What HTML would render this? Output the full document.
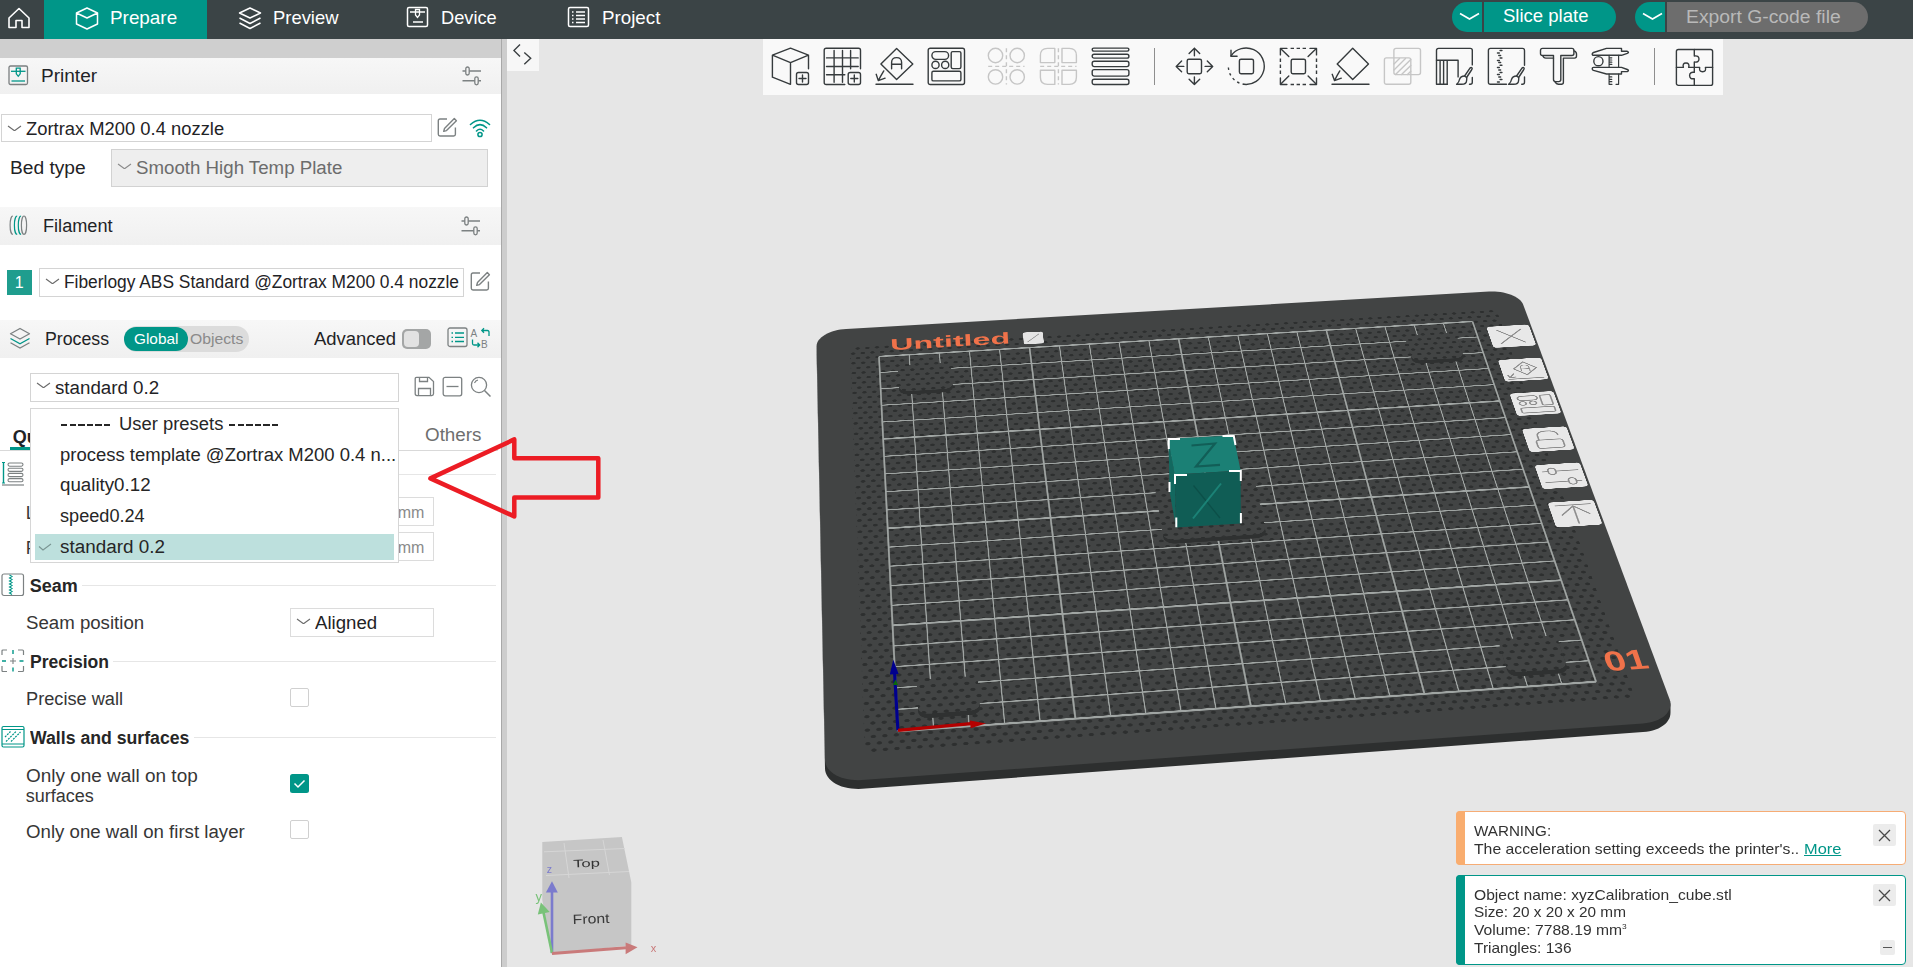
<!DOCTYPE html><html><head><meta charset="utf-8"><style>*{margin:0;padding:0}
html,body{width:1913px;height:967px;overflow:hidden;background:#e6e6e6;font-family:"Liberation Sans", sans-serif}
.a{position:absolute}
.t{position:absolute;white-space:nowrap;font-family:"Liberation Sans", sans-serif}
</style></head><body><div class="a" style="left:0px;top:0px;width:1913px;height:39px;background:#3b4446"></div>
<div class="a" style="left:44px;top:0px;width:163px;height:39px;background:#009688"></div>
<svg class="a" style="left:7px;top:7px;" width="24" height="22" viewBox="0 0 24 22"><path d="M2 11 L12 1.5 L22 11 V20.5 H15 V13.5 H9 V20.5 H2 Z" fill="none" stroke="#fff" stroke-width="1.6" stroke-linejoin="round"/></svg>
<svg class="a" style="left:75px;top:7px;" width="24" height="23" viewBox="0 0 24 23"><path d="M12 1 L22.5 6 V17 L12 22 L1.5 17 V6 Z M1.5 6 L12 11 L22.5 6" fill="none" stroke="#fff" stroke-width="1.5" stroke-linejoin="round"/></svg>
<div id="t_prepare" class="t" style="left:110.12px;top:9.18px;font-size:18.5px;line-height:18.5px;color:#fff;font-weight:400;transform:scaleX(1.0203);transform-origin:0 0;">Prepare</div>
<svg class="a" style="left:238px;top:7px;" width="24" height="23" viewBox="0 0 24 23"><path d="M12 1 L22.5 6 L12 11 L1.5 6 Z" fill="none" stroke="#fff" stroke-width="1.5" stroke-linejoin="round"/><path d="M1.5 11 L12 16.5 L22.5 11 M1.5 16 L12 21.5 L22.5 16" fill="none" stroke="#fff" stroke-width="1.5" stroke-linejoin="round"/></svg>
<div id="t_preview" class="t" style="left:273.02px;top:9.28px;font-size:18.5px;line-height:18.5px;color:#fff;font-weight:400;transform:scaleX(0.9954);transform-origin:0 0;">Preview</div>
<svg class="a" style="left:406px;top:6px;" width="24" height="22" viewBox="0 0 24 22"><rect x="1.5" y="1.5" width="20" height="19" rx="1.5" fill="none" stroke="#fff" stroke-width="1.5"/><path d="M4 6 H19 M7 16 H17" stroke="#fff" stroke-width="1.5"/><path d="M9.5 3.5 H13.5 V9 L11.5 11.5 L9.5 9 Z" fill="none" stroke="#fff" stroke-width="1.3"/></svg>
<div id="t_device" class="t" style="left:441.42px;top:9.18px;font-size:18.5px;line-height:18.5px;color:#fff;font-weight:400;transform:scaleX(0.9855);transform-origin:0 0;">Device</div>
<svg class="a" style="left:567px;top:6px;" width="24" height="22" viewBox="0 0 24 22"><rect x="1.5" y="1.5" width="20" height="19" rx="1.5" fill="none" stroke="#fff" stroke-width="1.5"/><path d="M5 6 H6.5 M9 6 H18 M5 9.5 H6.5 M9 9.5 H18 M5 13 H6.5 M9 13 H18 M5 16.5 H6.5 M9 16.5 H18" stroke="#fff" stroke-width="1.5"/></svg>
<div id="t_project" class="t" style="left:602.42px;top:9.18px;font-size:18.5px;line-height:18.5px;color:#fff;font-weight:400;transform:scaleX(1.0140);transform-origin:0 0;">Project</div>
<div class="a" style="left:1452px;top:2px;width:30px;height:30px;background:#009688;border-radius:15px 0 0 15px"></div>
<div class="a" style="left:1484px;top:2px;width:132px;height:30px;background:#009688;border-radius:0 15px 15px 0"></div>
<svg class="a" style="left:1459px;top:12px;" width="22" height="9" viewBox="0 0 22 9"><path d="M1 1.5 L10.5 7 L20 1.5" fill="none" stroke="#fff" stroke-width="1.6"/></svg>
<div id="t_slice" class="t" style="left:1503.04px;top:8.03px;font-size:17.5px;line-height:17.5px;color:#fff;font-weight:400;transform:scaleX(1.0582);transform-origin:0 0;">Slice plate</div>
<div class="a" style="left:1635px;top:2px;width:30px;height:30px;background:#009688;border-radius:15px 0 0 15px"></div>
<div class="a" style="left:1667px;top:2px;width:201px;height:30px;background:#6d6d6d;border-radius:0 15px 15px 0"></div>
<svg class="a" style="left:1642px;top:12px;" width="22" height="9" viewBox="0 0 22 9"><path d="M1 1.5 L10.5 7 L20 1.5" fill="none" stroke="#fff" stroke-width="1.6"/></svg>
<div id="t_export" class="t" style="left:1686.34px;top:8.53px;font-size:17.5px;line-height:17.5px;color:#b9b9b9;font-weight:400;transform:scaleX(1.1043);transform-origin:0 0;">Export G-code file</div>
<div class="a" style="left:0px;top:39px;width:501px;height:928px;background:#fff"></div>
<div class="a" style="left:0px;top:39px;width:501px;height:19px;background:#cfcfcf"></div>
<div class="a" style="left:501px;top:39px;width:1px;height:928px;background:#a8a8a8"></div>
<div class="a" style="left:502px;top:39px;width:5px;height:928px;background:#cdcdcd"></div>
<div class="a" style="left:0px;top:58px;width:501px;height:36px;background:linear-gradient(#f7f7f7,#f0f0f0)"></div>
<svg class="a" style="left:8px;top:65px;" width="21" height="21" viewBox="0 0 21 21"><rect x="1" y="1" width="18.5" height="18.5" rx="1.5" fill="none" stroke="#7b7f80" stroke-width="1.3"/><path d="M3 6.3 H17.5" stroke="#009688" stroke-width="1.3"/><path d="M8.3 3.2 H12.2 V8.8 L10.25 11.3 L8.3 8.8 Z" fill="none" stroke="#009688" stroke-width="1.3"/><path d="M3.5 16 H17" stroke="#009688" stroke-width="1.3"/></svg>
<div id="t_printer" class="t" style="left:41.23px;top:67.30px;font-size:18px;line-height:18px;color:#1f2326;font-weight:400;transform:scaleX(1.0577);transform-origin:0 0;">Printer</div>
<svg class="a" style="left:462px;top:66px;" width="20" height="20" viewBox="0 0 20 20"><path d="M0.5 5 H19 M0.5 14.8 H19" stroke="#7c8182" stroke-width="1.4"/><rect x="3.8" y="1" width="3.4" height="8" rx="1.7" fill="#f3f3f3" stroke="#7c8182" stroke-width="1.3"/><rect x="12.8" y="10.8" width="3.4" height="8" rx="1.7" fill="#f3f3f3" stroke="#7c8182" stroke-width="1.3"/></svg>
<div class="a" style="left:1px;top:114px;width:431px;height:28px;border:1px solid #d4d4d4;box-sizing:border-box;background:#fff"></div>
<svg class="a" style="left:7px;top:124.5px;" width="15" height="6.8" viewBox="0 0 15 6.8"><path d="M1 1 L7.5 5.8 L14 1" fill="none" stroke="#6a6a6a" stroke-width="1.1"/></svg>
<div id="t_zortrax" class="t" style="left:25.73px;top:119.84px;font-size:18.3px;line-height:18.3px;color:#1f2326;font-weight:400;transform:scaleX(1.0051);transform-origin:0 0;">Zortrax M200 0.4 nozzle</div>
<svg class="a" style="left:437px;top:117px;" width="21" height="21" viewBox="0 0 21 21"><path d="M10 2 H3 Q1.3 2 1.3 3.7 V17.3 Q1.3 19 3 19 H16.7 Q18.4 19 18.4 17.3 V10.5" fill="none" stroke="#7c8182" stroke-width="1.4"/><path d="M17.3 1.6 L19.4 3.7 L9.5 13.6 L6.7 14.4 L7.5 11.5 Z" fill="none" stroke="#7c8182" stroke-width="1.4" stroke-linejoin="round"/></svg>
<svg class="a" style="left:469px;top:117px;" width="22" height="21" viewBox="0 0 22 21"><path d="M1.5 7.5 Q11 -1 20.5 7.5 M4.5 10.8 Q11 4.5 17.5 10.8 M7.5 14 Q11 10.5 14.5 14" fill="none" stroke="#009688" stroke-width="1.6" stroke-linecap="round"/><circle cx="11" cy="17.5" r="2.1" fill="none" stroke="#009688" stroke-width="1.5"/></svg>
<div id="t_bedtype" class="t" style="left:10.23px;top:158.90px;font-size:18px;line-height:18px;color:#1f2326;font-weight:400;transform:scaleX(1.0652);transform-origin:0 0;">Bed type</div>
<div class="a" style="left:111px;top:149px;width:377px;height:38px;border:1px solid #d2d2d2;box-sizing:border-box;background:#eeeeee"></div>
<svg class="a" style="left:117px;top:162.5px;" width="15" height="6.8" viewBox="0 0 15 6.8"><path d="M1 1 L7.5 5.8 L14 1" fill="none" stroke="#8a8a8a" stroke-width="1.1"/></svg>
<div id="t_smooth" class="t" style="left:135.73px;top:158.90px;font-size:18px;line-height:18px;color:#6c6c6c;font-weight:400;transform:scaleX(1.0381);transform-origin:0 0;">Smooth High Temp Plate</div>
<div class="a" style="left:0px;top:207px;width:501px;height:38px;background:linear-gradient(#f7f7f7,#f0f0f0)"></div>
<svg class="a" style="left:9px;top:215px;" width="20" height="21" viewBox="0 0 20 21"><path d="M3.9 1 A2.8 9.2 0 0 0 3.9 19.4" fill="none" stroke="#7c8182" stroke-width="1.2"/><path d="M8.2 1 A2.8 9.2 0 0 0 8.2 19.4 M12.1 1 A2.8 9.2 0 0 0 12.1 19.4" fill="none" stroke="#009688" stroke-width="1.2"/><ellipse cx="15" cy="10.2" rx="2.6" ry="9.2" fill="none" stroke="#7c8182" stroke-width="1.2"/></svg>
<div id="t_filament" class="t" style="left:43.23px;top:216.80px;font-size:18px;line-height:18px;color:#1f2326;font-weight:400;transform:scaleX(1.0074);transform-origin:0 0;">Filament</div>
<svg class="a" style="left:461px;top:216px;" width="20" height="20" viewBox="0 0 20 20"><path d="M0.5 5 H19 M0.5 14.8 H19" stroke="#7c8182" stroke-width="1.4"/><rect x="3.8" y="1" width="3.4" height="8" rx="1.7" fill="#f3f3f3" stroke="#7c8182" stroke-width="1.3"/><rect x="12.8" y="10.8" width="3.4" height="8" rx="1.7" fill="#f3f3f3" stroke="#7c8182" stroke-width="1.3"/></svg>
<div class="a" style="left:7px;top:270px;width:25px;height:25px;background:#1f9d8e"></div>
<div id="t_one" class="t" style="left:14.76px;top:274.60px;font-size:16px;line-height:16px;color:#fff;font-weight:400;">1</div>
<div class="a" style="left:39px;top:268px;width:425px;height:29px;border:1px solid #d4d4d4;box-sizing:border-box;background:#fff"></div>
<svg class="a" style="left:45px;top:277.5px;" width="15" height="6.8" viewBox="0 0 15 6.8"><path d="M1 1 L7.5 5.8 L14 1" fill="none" stroke="#6a6a6a" stroke-width="1.1"/></svg>
<div id="t_fiber" class="t" style="left:64.13px;top:273.00px;font-size:18px;line-height:18px;color:#1f2326;font-weight:400;transform:scaleX(0.9647);transform-origin:0 0;">Fiberlogy ABS Standard @Zortrax M200 0.4 nozzle</div>
<svg class="a" style="left:470px;top:271px;" width="21" height="21" viewBox="0 0 21 21"><path d="M10 2 H3 Q1.3 2 1.3 3.7 V17.3 Q1.3 19 3 19 H16.7 Q18.4 19 18.4 17.3 V10.5" fill="none" stroke="#7c8182" stroke-width="1.4"/><path d="M17.3 1.6 L19.4 3.7 L9.5 13.6 L6.7 14.4 L7.5 11.5 Z" fill="none" stroke="#7c8182" stroke-width="1.4" stroke-linejoin="round"/></svg>
<div class="a" style="left:0px;top:320px;width:501px;height:38px;background:linear-gradient(#f7f7f7,#f0f0f0)"></div>
<svg class="a" style="left:9px;top:327px;" width="22" height="22" viewBox="0 0 22 22"><path d="M11 1.5 L20.5 6.8 L11 12 L1.5 6.8 Z" fill="none" stroke="#7c8182" stroke-width="1.3" stroke-linejoin="round"/><path d="M1.5 11.5 L11 16.8 L20.5 11.5" fill="none" stroke="#009688" stroke-width="1.3"/><path d="M1.5 15.8 L11 21 L20.5 15.8" fill="none" stroke="#7c8182" stroke-width="1.3"/></svg>
<div id="t_process" class="t" style="left:44.73px;top:329.90px;font-size:18px;line-height:18px;color:#1f2326;font-weight:400;transform:scaleX(0.9844);transform-origin:0 0;">Process</div>
<div class="a" style="left:124px;top:326px;width:125px;height:26px;background:#dcdcdc;border-radius:13px"></div>
<div class="a" style="left:124px;top:327px;width:64px;height:24px;background:#009688;border-radius:12px"></div>
<div id="t_global" class="t" style="left:134.28px;top:331.45px;font-size:15px;line-height:15px;color:#fff;font-weight:400;transform:scaleX(1.0238);transform-origin:0 0;">Global</div>
<div id="t_objects" class="t" style="left:189.78px;top:331.45px;font-size:15px;line-height:15px;color:#8a8a8a;font-weight:400;transform:scaleX(1.0490);transform-origin:0 0;">Objects</div>
<div id="t_advanced" class="t" style="left:314.23px;top:330.10px;font-size:18px;line-height:18px;color:#1f2326;font-weight:400;transform:scaleX(1.0253);transform-origin:0 0;">Advanced</div>
<div class="a" style="left:402px;top:329px;width:29px;height:20px;background:#a4a6a6;border-radius:5px"></div>
<div class="a" style="left:404px;top:331px;width:15px;height:16px;background:#e2e2e2;border-radius:4px"></div>
<svg class="a" style="left:447px;top:327px;" width="22" height="21" viewBox="0 0 22 21"><rect x="1" y="1" width="19" height="18.5" rx="2" fill="none" stroke="#7c8182" stroke-width="1.3"/><path d="M4.5 6 H6 M8 6 H17 M4.5 10.3 H6 M8 10.3 H17 M4.5 14.5 H6 M8 14.5 H17" stroke="#009688" stroke-width="1.3"/></svg>
<svg class="a" style="left:470px;top:327px;" width="22" height="22" viewBox="0 0 22 22"><text x="0.5" y="9.5" font-family="Liberation Sans" font-size="10" fill="#7c8182">A</text><text x="11" y="20.5" font-family="Liberation Sans" font-size="10" fill="#7c8182">B</text><path d="M19 9 V5 Q19 3.5 17.5 3.5 H12 M14 1.2 L11.8 3.5 L14 5.8" fill="none" stroke="#009688" stroke-width="1.3"/><path d="M2.5 12.5 V16.5 Q2.5 18 4 18 H9.5 M7.5 15.7 L9.7 18 L7.5 20.3" fill="none" stroke="#009688" stroke-width="1.3"/></svg>
<div class="a" style="left:30px;top:373px;width:369px;height:29px;border:1px solid #d4d4d4;box-sizing:border-box;background:#fff"></div>
<svg class="a" style="left:36px;top:381.5px;" width="15" height="6.8" viewBox="0 0 15 6.8"><path d="M1 1 L7.5 5.8 L14 1" fill="none" stroke="#6a6a6a" stroke-width="1.1"/></svg>
<div id="t_std" class="t" style="left:55.43px;top:379.00px;font-size:18px;line-height:18px;color:#1f2326;font-weight:400;transform:scaleX(1.0408);transform-origin:0 0;">standard 0.2</div>
<svg class="a" style="left:414px;top:376px;" width="21" height="21" viewBox="0 0 21 21"><path d="M2.5 1.3 H15 L19.5 5.5 V17.8 Q19.5 19.6 17.7 19.6 H3 Q1.2 19.6 1.2 17.8 V3 Q1.2 1.3 2.5 1.3 Z" fill="none" stroke="#7c8182" stroke-width="1.3"/><path d="M5.5 1.5 V5.5 H13.5 V1.5 M4.5 19.5 V12.5 H16.5 V19.5" fill="none" stroke="#7c8182" stroke-width="1.3"/></svg>
<svg class="a" style="left:442px;top:376px;" width="21" height="21" viewBox="0 0 21 21"><rect x="1.2" y="1.3" width="18.5" height="18.5" rx="2" fill="none" stroke="#7c8182" stroke-width="1.3"/><path d="M4.5 10.5 H16.5" stroke="#7c8182" stroke-width="1.3"/></svg>
<svg class="a" style="left:470px;top:376px;" width="22" height="22" viewBox="0 0 22 22"><circle cx="9" cy="9" r="7.6" fill="none" stroke="#7c8182" stroke-width="1.3"/><path d="M14.5 14.5 L20.5 20.5" stroke="#7c8182" stroke-width="1.5"/><path d="M4.5 7 Q5.5 4.5 8 4" fill="none" stroke="#7c8182" stroke-width="1.1"/></svg>
<div id="t_qu" class="t" style="left:12.73px;top:427.50px;font-size:18px;line-height:18px;color:#1f2326;font-weight:700;">Quality</div>
<div id="t_others" class="t" style="left:425.33px;top:426.10px;font-size:18px;line-height:18px;color:#6e6e6e;font-weight:400;transform:scaleX(1.0453);transform-origin:0 0;">Others</div>
<div class="a" style="left:10px;top:447px;width:22px;height:3px;background:#009688"></div>
<div class="a" style="left:0px;top:450px;width:498px;height:1px;background:#d9d9d9"></div>
<svg class="a" style="left:1px;top:461px;" width="25" height="25" viewBox="0 0 25 25"><path d="M2.5 1.5 V22" stroke="#009688" stroke-width="1.4"/><path d="M1 1.5 H4 M1 22 H4" stroke="#009688" stroke-width="1.2"/><rect x="7" y="2" width="15" height="3.2" rx="1.6" fill="none" stroke="#7c8182" stroke-width="1.1"/><rect x="7" y="7.2" width="15" height="3.2" rx="1.6" fill="none" stroke="#7c8182" stroke-width="1.1"/><rect x="7" y="12.4" width="15" height="3.2" rx="1.6" fill="none" stroke="#7c8182" stroke-width="1.1"/><rect x="7" y="17.6" width="15" height="3.2" rx="1.6" fill="none" stroke="#7c8182" stroke-width="1.1"/><path d="M1 24 H23" stroke="#7c8182" stroke-width="1.2"/></svg>
<div class="a" style="left:30px;top:474px;width:466px;height:1px;background:#e6e6e6"></div>
<div id="t_L" class="t" style="left:25.73px;top:503.60px;font-size:18px;line-height:18px;color:#363636;font-weight:400;">Layer height</div>
<div id="t_F" class="t" style="left:25.73px;top:538.60px;font-size:18px;line-height:18px;color:#363636;font-weight:400;">First layer height</div>
<div class="a" style="left:290px;top:497px;width:144px;height:29px;border:1px solid #dcdcdc;box-sizing:border-box;background:#fff"></div>
<div class="a" style="left:290px;top:532px;width:144px;height:29px;border:1px solid #dcdcdc;box-sizing:border-box;background:#fff"></div>
<div id="t_mm1" class="t" style="left:397.76px;top:505.30px;font-size:16px;line-height:16px;color:#8a8a8a;font-weight:400;">mm</div>
<div id="t_mm2" class="t" style="left:397.76px;top:540.30px;font-size:16px;line-height:16px;color:#8a8a8a;font-weight:400;">mm</div>
<svg class="a" style="left:1px;top:573px;" width="24" height="24" viewBox="0 0 24 24"><rect x="1" y="1" width="21.5" height="21.5" rx="2" fill="none" stroke="#7c8182" stroke-width="1.2"/><path d="M8.5 2 L11 3.5 L8.5 5 L11 6.5 L8.5 8 L11 9.5 L8.5 11 L11 12.5 L8.5 14 L11 15.5 L8.5 17 L11 18.5 L8.5 20 L11 21.5" fill="none" stroke="#009688" stroke-width="1.1"/></svg>
<div id="t_seam" class="t" style="left:29.73px;top:576.90px;font-size:18px;line-height:18px;color:#262626;font-weight:700;">Seam</div>
<div class="a" style="left:82px;top:585px;width:414px;height:1px;background:#e6e6e6"></div>
<div id="t_seampos" class="t" style="left:25.73px;top:613.80px;font-size:18px;line-height:18px;color:#363636;font-weight:400;transform:scaleX(1.0357);transform-origin:0 0;">Seam position</div>
<div class="a" style="left:290px;top:608px;width:144px;height:29px;border:1px solid #dcdcdc;box-sizing:border-box;background:#fff"></div>
<svg class="a" style="left:296px;top:617.5px;" width="15" height="6.8" viewBox="0 0 15 6.8"><path d="M1 1 L7.5 5.8 L14 1" fill="none" stroke="#6a6a6a" stroke-width="1.1"/></svg>
<div id="t_aligned" class="t" style="left:315.23px;top:613.80px;font-size:18px;line-height:18px;color:#1f2326;font-weight:400;transform:scaleX(1.0339);transform-origin:0 0;">Aligned</div>
<svg class="a" style="left:1px;top:649px;" width="24" height="24" viewBox="0 0 24 24"><path d="M1 6 V2 Q1 1 2 1 H6 M17 1 H21.5 Q22.5 1 22.5 2 V6 M22.5 17 V21.5 Q22.5 22.5 21.5 22.5 H17 M6 22.5 H2 Q1 22.5 1 21.5 V17" fill="none" stroke="#7c8182" stroke-width="1.2"/><path d="M12 1 V5 M12 18.5 V22.5 M1 12 H5 M18.5 12 H22.5" stroke="#009688" stroke-width="1.4"/><path d="M12 9 V15 M9 12 H15" stroke="#7c8182" stroke-width="1.1"/></svg>
<div id="t_precision" class="t" style="left:30.23px;top:653.10px;font-size:18px;line-height:18px;color:#262626;font-weight:700;transform:scaleX(0.9747);transform-origin:0 0;">Precision</div>
<div class="a" style="left:113px;top:661px;width:383px;height:1px;background:#e6e6e6"></div>
<div id="t_precwall" class="t" style="left:26.23px;top:690.00px;font-size:18px;line-height:18px;color:#363636;font-weight:400;transform:scaleX(1.0106);transform-origin:0 0;">Precise wall</div>
<div class="a" style="left:290px;top:688px;width:19px;height:19px;border:1px solid #d0d0d0;border-radius:2px;box-sizing:border-box;background:#fff"></div>
<svg class="a" style="left:1px;top:725px;" width="25" height="24" viewBox="0 0 25 24"><rect x="1" y="1.5" width="22" height="20.5" rx="1.5" fill="none" stroke="#009688" stroke-width="1.2"/><path d="M1 4.5 H23 M1 19 H23" stroke="#009688" stroke-width="1.2"/><path d="M5 16.5 L15 6.5 M10 16.5 L19.5 7 M4 12 L9.5 6.5" stroke="#009688" stroke-width="1.2" stroke-dasharray="2 1"/></svg>
<div id="t_walls" class="t" style="left:29.73px;top:729.10px;font-size:18px;line-height:18px;color:#262626;font-weight:700;transform:scaleX(0.9815);transform-origin:0 0;">Walls and surfaces</div>
<div class="a" style="left:194px;top:737px;width:302px;height:1px;background:#e6e6e6"></div>
<div id="t_onlytop" class="t" style="left:25.73px;top:766.70px;font-size:18px;line-height:18px;color:#363636;font-weight:400;transform:scaleX(1.0528);transform-origin:0 0;">Only one wall on top</div>
<div id="t_surfaces" class="t" style="left:25.73px;top:786.90px;font-size:18px;line-height:18px;color:#363636;font-weight:400;">surfaces</div>
<svg class="a" style="left:290px;top:774px;" width="20" height="20" viewBox="0 0 20 20"><rect x="0" y="0" width="19" height="19" rx="2.5" fill="#009688"/><path d="M4.5 9.5 L8 13 L14.5 6.5" fill="none" stroke="#fff" stroke-width="1.5"/></svg>
<div id="t_onlyfirst" class="t" style="left:25.73px;top:822.50px;font-size:18px;line-height:18px;color:#363636;font-weight:400;transform:scaleX(1.0362);transform-origin:0 0;">Only one wall on first layer</div>
<div class="a" style="left:290px;top:820px;width:19px;height:19px;border:1px solid #d0d0d0;border-radius:2px;box-sizing:border-box;background:#fff"></div>
<div class="a" style="left:30px;top:408px;width:369px;height:155px;border:1px solid #d6d6d6;box-sizing:border-box;background:#fff"></div>
<div class="a" style="left:35px;top:534px;width:359px;height:26px;background:#bde0dd"></div>
<div class="a" style="left:61px;top:424px;width:52px;height:1.6px;background:repeating-linear-gradient(90deg,#262626 0,#262626 6.4px,transparent 6.4px,transparent 8.6px)"></div>
<div id="t_dd1" class="t" style="left:119.33px;top:415.10px;font-size:18px;line-height:18px;color:#262626;font-weight:400;transform:scaleX(1.0228);transform-origin:0 0;">User presets</div>
<div class="a" style="left:229px;top:424px;width:52px;height:1.6px;background:repeating-linear-gradient(90deg,#262626 0,#262626 6.4px,transparent 6.4px,transparent 8.6px)"></div>
<div id="t_dd2" class="t" style="left:59.73px;top:445.60px;font-size:18px;line-height:18px;color:#262626;font-weight:400;transform:scaleX(1.0268);transform-origin:0 0;">process template @Zortrax M200 0.4 n...</div>
<div id="t_dd3" class="t" style="left:59.73px;top:476.40px;font-size:18px;line-height:18px;color:#262626;font-weight:400;transform:scaleX(1.0400);transform-origin:0 0;">quality0.12</div>
<div id="t_dd4" class="t" style="left:59.73px;top:507.40px;font-size:18px;line-height:18px;color:#262626;font-weight:400;transform:scaleX(1.0072);transform-origin:0 0;">speed0.24</div>
<div id="t_dd5" class="t" style="left:59.73px;top:538.40px;font-size:18px;line-height:18px;color:#262626;font-weight:400;transform:scaleX(1.0480);transform-origin:0 0;">standard 0.2</div>
<svg class="a" style="left:38px;top:542px;" width="15" height="10" viewBox="0 0 15 10"><path d="M1 4.5 L5 8 L13 2" fill="none" stroke="#7a9593" stroke-width="1.1"/></svg>
<div class="a" style="left:507px;top:39px;width:1406px;height:928px;background:#e6e6e6"></div>
<div class="a" style="left:507px;top:39px;width:32px;height:32px;background:#f7f7f7"></div>
<svg class="a" style="left:513px;top:44px;" width="20" height="22" viewBox="0 0 20 22"><path d="M7 0.6 L0.9 6.5 L7 12.4" fill="none" stroke="#3a3f41" stroke-width="1.4"/><path d="M11.3 8.4 L17.7 14.3 L11.3 20.2" fill="none" stroke="#3a3f41" stroke-width="1.4"/></svg>
<div class="a" style="left:763px;top:39px;width:960px;height:56px;background:#f9f9f9"></div>
<svg class="a" style="left:771px;top:47px;" width="40" height="40" viewBox="0 0 40 40"><g fill="none" stroke="#363b3d" stroke-width="1.4" stroke-linejoin="round" stroke-linecap="round"><path d="M19.5 1.2 L37.5 8.2 L19.5 15.6 L1.4 8.2 Z M1.4 8.2 V30.2 L19.5 37.3 V15.6 M37.5 8.2 V21.8"/><rect x="25.5" y="25.5" width="12" height="12" rx="2"/><path d="M31.5 28 V35 M28 31.5 H35"/></g></svg>
<svg class="a" style="left:823px;top:47px;" width="40" height="40" viewBox="0 0 40 40"><g fill="none" stroke="#363b3d" stroke-width="1.4" stroke-linejoin="round" stroke-linecap="round"><path d="M21.8 37.5 H3.2 Q1.2 37.5 1.2 35.5 V3.2 Q1.2 1.2 3.2 1.2 H35.5 Q37.5 1.2 37.5 3.2 V21.8"/><path d="M11.1 3.5 V35.2 M19.5 3.5 V35.2 M27.6 3.5 V21.8 M3.5 10.9 H35.2 M3.5 19.5 H35.2 M3.5 27.8 H21.8"/><rect x="25.2" y="25.5" width="12.3" height="12" rx="2"/><path d="M31.3 28 V35 M27.8 31.5 H34.8"/></g></svg>
<svg class="a" style="left:875px;top:47px;" width="40" height="40" viewBox="0 0 40 40"><g fill="none" stroke="#363b3d" stroke-width="1.4" stroke-linejoin="round" stroke-linecap="round"><path d="M21.6 1.4 L37.8 16.9 L21.6 32.5 L5.9 16.9 Z"/><path d="M16.6 21.8 V15.5 Q16.6 10.6 21.6 10.6 Q26.6 10.6 26.6 15.5 V21.8 M16.6 17.2 H26.6"/><path d="M8.8 23.9 Q6 28.5 3.3 33.6 M1.2 27.3 L3.3 33.6 L10.1 31.2 M1 37.3 H38"/></g></svg>
<svg class="a" style="left:927px;top:47px;" width="40" height="40" viewBox="0 0 40 40"><g fill="none" stroke="#363b3d" stroke-width="1.4" stroke-linejoin="round" stroke-linecap="round"><rect x="1.2" y="1.2" width="36.3" height="36.3" rx="2"/><rect x="4.9" y="4.6" width="16.7" height="7.8" rx="3.9"/><rect x="24.2" y="4.6" width="9.7" height="17" rx="1.5"/><circle cx="8.5" cy="17.9" r="3.6"/><circle cx="18.2" cy="17.9" r="3.6"/><rect x="4.9" y="24.2" width="29" height="9.7" rx="1.5"/></g></svg>
<svg class="a" style="left:987px;top:47px;" width="40" height="40" viewBox="0 0 40 40"><g fill="none" stroke="#c6c6c6" stroke-width="1.4" stroke-linejoin="round" stroke-linecap="round"><circle cx="8.5" cy="8.5" r="7.2"/><circle cx="30.2" cy="8.5" r="7.2"/><circle cx="8.5" cy="29.9" r="7.2"/><circle cx="30.2" cy="29.9" r="7.2"/><path d="M19.4 1.2 V37.5 M1.2 19.4 H37.5" stroke-dasharray="4 3" stroke-linecap="butt"/></g></svg>
<svg class="a" style="left:1039px;top:47px;" width="40" height="40" viewBox="0 0 40 40"><g fill="none" stroke="#c6c6c6" stroke-width="1.4" stroke-linejoin="round" stroke-linecap="round"><path d="M15.8 15.6 H1.4 V8.5 Q1.4 1.4 8.5 1.4 H15.8 Z M23 15.6 H37.4 V8.5 Q37.4 1.4 30.3 1.4 H23 Z M15.8 23.2 H1.4 V30.3 Q1.4 37.4 8.5 37.4 H15.8 Z M23 23.2 H37.4 V30.3 Q37.4 37.4 30.3 37.4 H23 Z"/><path d="M19.4 1.2 V37.5 M1.2 19.4 H37.5" stroke-dasharray="4 3" stroke-linecap="butt"/></g></svg>
<svg class="a" style="left:1091px;top:47px;" width="40" height="40" viewBox="0 0 40 40"><g fill="none" stroke="#363b3d" stroke-width="1.4" stroke-linejoin="round" stroke-linecap="round"><rect x="1.2" y="1.1" width="36.7" height="3" rx="1.5"/><rect x="1.2" y="7.2" width="36.7" height="3.9" rx="1.9"/><rect x="1.2" y="14.3" width="36.7" height="5.3" rx="2"/><rect x="1.2" y="22.6" width="36.7" height="6.5" rx="2"/><rect x="1.2" y="32.3" width="36.7" height="5.2" rx="2"/></g></svg>
<div class="a" style="left:1154px;top:48px;width:1px;height:37px;background:#8e8e8e"></div>
<svg class="a" style="left:1175px;top:47px;" width="40" height="40" viewBox="0 0 40 40"><g fill="none" stroke="#363b3d" stroke-width="1.4" stroke-linejoin="round" stroke-linecap="round"><rect x="12.2" y="12.2" width="14.3" height="14.5" rx="1.6"/><path d="M19.4 1.2 V8.8 M14.1 6.6 L19.4 1.2 L24.7 6.6 M19.4 37.5 V30 M14.1 32.2 L19.4 37.5 L24.7 32.2 M1.2 19.4 H8.8 M6.6 14.1 L1.2 19.4 L6.6 24.7 M37.7 19.4 H30.1 M32.3 14.1 L37.7 19.4 L32.3 24.7"/></g></svg>
<svg class="a" style="left:1227px;top:47px;" width="40" height="40" viewBox="0 0 40 40"><g fill="none" stroke="#363b3d" stroke-width="1.4" stroke-linejoin="round" stroke-linecap="round"><rect x="12.4" y="12.2" width="14.1" height="14.5" rx="1.6"/><path d="M4 9 A18.2 18.2 0 1 1 17 37.3"/><path d="M1.4 20.5 A18.2 18.2 0 0 0 17 37.3" stroke-dasharray="2.5 3.3" stroke-linecap="butt"/><path d="M4 3.3 V9.2 H10.1"/></g></svg>
<svg class="a" style="left:1279px;top:47px;" width="40" height="40" viewBox="0 0 40 40"><g fill="none" stroke="#363b3d" stroke-width="1.4" stroke-linejoin="round" stroke-linecap="round"><rect x="12.2" y="12.2" width="14.3" height="14.5" rx="1.6"/><path d="M1.4 7.9 V1.4 H7.9 M31 1.4 H37.5 V7.9 M37.5 31 V37.5 H31 M7.9 37.5 H1.4 V31"/><path d="M11.6 1.4 H27.5 M11.6 37.5 H27.5 M1.4 11.6 V27.5 M37.5 11.6 V27.5" stroke-dasharray="3.4 2.6" stroke-linecap="butt"/><path d="M1.8 1.8 L9.8 9.6 M37.1 1.8 L29.1 9.6 M1.8 37.1 L9.8 29.1 M37.1 37.1 L29.1 29.1"/></g></svg>
<svg class="a" style="left:1331px;top:47px;" width="40" height="40" viewBox="0 0 40 40"><g fill="none" stroke="#363b3d" stroke-width="1.4" stroke-linejoin="round" stroke-linecap="round"><path d="M21.7 1.3 L37.5 16.9 L21.7 32.5 L6.2 16.9 Z"/><path d="M8.8 23.9 Q6 28.5 3.5 33.6 M1.2 27.3 L3.5 33.6 L10.3 31.2 M1 37.3 H38"/></g></svg>
<svg class="a" style="left:1383px;top:47px;" width="40" height="40" viewBox="0 0 40 40"><g fill="none" stroke="#c6c6c6" stroke-width="1.4" stroke-linejoin="round" stroke-linecap="round"><rect x="10.9" y="1.4" width="26.6" height="26.2" rx="2"/><rect x="1.4" y="10.9" width="26.4" height="26.4" rx="2"/><path d="M11 17 L16.5 11.5 M11 23 L22.5 11.5 M12.5 27.5 L27.8 12.5 M18.5 27.5 L27.8 18.5 M24.5 27.5 L27.8 24.2"/></g></svg>
<svg class="a" style="left:1435px;top:47px;" width="40" height="40" viewBox="0 0 40 40"><g fill="none" stroke="#363b3d" stroke-width="1.4" stroke-linejoin="round" stroke-linecap="round"><path d="M12.4 37.3 H1.5 V3.4 Q1.5 1.4 3.5 1.4 H35.3 Q37.3 1.4 37.3 3.4 V17.9 M37.3 30.5 V35.3 Q37.3 37.3 35.3 37.3 H34.5"/><path d="M1.5 13.2 H23.1 V29.9 M5.1 13.2 V37.3 M8.6 13.2 V37.3 M12.2 13.2 V37.3"/><path d="M36.5 23 Q37.7 21.6 36.9 20.7 Q36 20 34.8 21.3 L29.6 29 L31.6 30.5 Z"/><path d="M29.6 29 Q25.5 29 24.5 32.5 Q24 35.5 21.6 37.3 H26.6 Q31.5 37.2 31.6 33.4 Q32 31.5 31.6 30.5"/></g></svg>
<svg class="a" style="left:1487px;top:47px;" width="40" height="40" viewBox="0 0 40 40"><g fill="none" stroke="#363b3d" stroke-width="1.4" stroke-linejoin="round" stroke-linecap="round"><path d="M19.5 37.3 H3.4 Q1.4 37.3 1.4 35.3 V3.4 Q1.4 1.4 3.4 1.4 H35.5 Q37.5 1.4 37.5 3.4 V18.2 M37.5 29.9 V35.3 Q37.5 37.3 35.5 37.3 H34.7"/><path d="M13.1 3.5 H14.9 M10.5 6.1 H12.3 M11.8 8.5 H13.6 M13.1 10.9 H14.9 M10.5 13.5 H12.3 M11.8 15.6 H13.6 M13.1 18.2 H14.9 M10.5 20.5 H12.3 M11.8 22.9 H13.6 M13.1 25.5 H14.9 M10.5 27.6 H12.3 M11.8 29.9 H13.6 M13.1 32.5 H14.9 M10.5 34.9 H12.3" stroke-width="1.5" stroke-linecap="round"/><path d="M36.5 23 Q37.7 21.6 36.9 20.7 Q36 20 34.8 21.3 L29.6 29 L31.6 30.5 Z"/><path d="M29.6 29 Q25.5 29 24.5 32.5 Q24 35.5 21.6 37.3 H26.6 Q31.5 37.2 31.6 33.4 Q32 31.5 31.6 30.5"/></g></svg>
<svg class="a" style="left:1539px;top:47px;" width="40" height="40" viewBox="0 0 40 40"><g fill="none" stroke="#363b3d" stroke-width="1.4" stroke-linejoin="round" stroke-linecap="round"><path d="M3.5 1.4 H32.9 Q34.9 1.4 34.9 3.5 V6.5 Q34.9 8.5 32.9 8.5 H21.8 V32.6 Q21.8 34.6 19.8 34.6 H16.5 Q14.5 34.6 14.5 32.6 V8.5 H3.5 Q1.5 8.5 1.5 6.5 V3.5 Q1.5 1.4 3.5 1.4 Z"/><path d="M35 3.8 Q37.5 4.6 37.5 7 V9.1 Q37.5 11.1 35.5 11.1 H24.4 V35.3 Q24.4 37.3 22.4 37.3 H19.5 Q17.8 37.3 16.2 35.3 M3.8 8.6 Q4.5 11.1 6.8 11.1 H14.5"/></g></svg>
<svg class="a" style="left:1591px;top:47px;" width="40" height="40" viewBox="0 0 40 40"><g fill="none" stroke="#363b3d" stroke-width="1.4" stroke-linejoin="round" stroke-linecap="round"><path d="M2.5 8.3 Q1.2 8.3 1.2 7 Q1.2 6 2.5 5.5 L15.5 1.4 H30.5 V4.3 H36.3 Q38.6 5.2 36.3 6.4 L30.5 8.3 Z"/><path d="M2.5 20.4 H30.5 L36.3 22.5 Q38.6 23.6 36.3 24.6 H30.5 V27 H15.5 L2.5 23.4 Q1.2 23 1.2 21.8 Q1.2 20.4 2.5 20.4 Z"/><circle cx="7.4" cy="14.2" r="4.6"/><path d="M18.1 8.3 V20.4 M27.6 8.3 V20.4 M18.1 27 V37.3 H21 M27.6 27 V37.3 H25 M18.3 10.8 H20.8 M18.3 13 H20.8 M18.3 15.2 H20.8 M18.3 17.4 H20.8 M18.3 29.9 H20.8 M18.3 32.3 H20.8 M18.3 34.7 H20.8" stroke-width="1.2"/></g></svg>
<div class="a" style="left:1654px;top:48px;width:1px;height:37px;background:#8e8e8e"></div>
<svg class="a" style="left:1675px;top:47px;" width="40" height="40" viewBox="0 0 40 40"><g fill="none" stroke="#363b3d" stroke-width="1.4" stroke-linejoin="round" stroke-linecap="round"><rect x="1.4" y="2.5" width="36.2" height="35.9" rx="2"/><path d="M19.3 2.5 V9 Q23.8 8.2 24 12 Q23.8 15.8 19.3 15 V20.4 H13.7 Q14.8 16 11 16 Q7.2 16 8.4 20.4 H1.4 M19.3 20.4 H24.7 Q23.7 24.8 27.6 24.8 Q31.5 24.8 30.4 20.4 H37.6 M19.3 20.4 V25.4 Q14.7 24.6 14.6 28.6 Q14.7 32.5 19.3 31.6 V38.4"/></g></svg>
<svg class="a" style="left:0px;top:0px;pointer-events:none" width="1913" height="967" viewBox="0 0 1913 967"><polygon points="1670.5,700.5 1670.4,702.6 1670.0,704.7 1669.3,706.7 1668.2,708.6 1666.9,710.5 1665.2,712.2 1663.2,713.9 1660.9,715.3 1658.4,716.7 1655.7,717.8 1652.7,718.7 1649.6,719.5 1646.4,720.1 1643.0,720.4 862.0,777.1 858.4,777.2 854.8,777.1 851.4,776.8 848.0,776.3 844.7,775.6 841.6,774.7 838.7,773.5 836.0,772.2 833.6,770.7 831.4,769.1 829.5,767.3 827.9,765.4 826.7,763.3 825.8,761.2 825.2,759.1 825.0,756.9 816.6,343.2 816.6,354.9 825.0,768.6 825.2,770.8 825.8,772.9 826.7,775.0 827.9,777.1 829.5,779.0 831.4,780.8 833.6,782.4 836.0,783.9 838.7,785.2 841.6,786.4 844.7,787.3 848.0,788.0 851.4,788.5 854.8,788.8 858.4,788.9 862.0,788.8 1643.0,732.1 1646.4,731.8 1649.6,731.2 1652.7,730.4 1655.7,729.5 1658.4,728.4 1660.9,727.0 1663.2,725.6 1665.2,723.9 1666.9,722.2 1668.2,720.3 1669.3,718.4 1670.0,716.4 1670.4,714.3 1670.5,712.2" fill="#2d2f2f"/><polygon points="1489.2,291.6 1492.0,291.5 1494.9,291.6 1497.7,291.8 1500.5,292.1 1503.3,292.6 1506.0,293.2 1508.6,293.9 1511.0,294.8 1513.3,295.8 1515.4,296.8 1517.3,298.0 1519.0,299.3 1520.5,300.6 1521.7,302.0 1522.7,303.4 1523.3,304.9 1669.6,699.2 1670.2,701.3 1670.5,703.5 1670.4,705.6 1670.0,707.7 1669.3,709.7 1668.2,711.6 1666.9,713.5 1665.2,715.2 1663.2,716.9 1660.9,718.3 1658.4,719.7 1655.7,720.8 1652.7,721.7 1649.6,722.5 1646.4,723.1 1643.0,723.4 862.0,780.1 858.4,780.2 854.8,780.1 851.4,779.8 848.0,779.3 844.7,778.6 841.6,777.7 838.7,776.5 836.0,775.2 833.6,773.7 831.4,772.1 829.5,770.3 827.9,768.4 826.7,766.3 825.8,764.2 825.2,762.1 825.0,759.9 816.6,346.2 816.7,344.7 817.1,343.1 817.8,341.6 818.7,340.1 820.0,338.7 821.5,337.3 823.2,335.9 825.1,334.7 827.3,333.5 829.6,332.5 832.1,331.6 834.8,330.8 837.5,330.1 840.3,329.5 843.2,329.2 846.2,328.9" fill="#424444"/></svg>
<div class="a" style="left:0;top:0;width:1438px;height:1435px;transform-origin:0 0;transform:matrix3d(0.512064277,-0.0236679097,0,1.59908451e-05,-0.0977225143,0.216241828,0,-0.000126160325,0,0,1,0,816.259128,330.646955,0,1)"><svg width="1438" height="1435" viewBox="0 0 1438 1435"><defs><pattern id="dots" patternUnits="userSpaceOnUse" width="19.20" height="36.60" x="0" y="0"><ellipse cx="4.80" cy="4.50" rx="4.56" ry="4.44" fill="#2d2f2f"/><ellipse cx="14.40" cy="22.80" rx="4.56" ry="4.44" fill="#2d2f2f"/></pattern></defs><rect x="66.0" y="67.8" width="1314.0" height="1302.0" rx="24.0" fill="url(#dots)"/><path d="M183.0 112.8 V1312.8 M243.0 112.8 V1312.8 M303.0 112.8 V1312.8 M363.0 112.8 V1312.8 M483.0 112.8 V1312.8 M543.0 112.8 V1312.8 M603.0 112.8 V1312.8 M663.0 112.8 V1312.8 M783.0 112.8 V1312.8 M843.0 112.8 V1312.8 M903.0 112.8 V1312.8 M963.0 112.8 V1312.8 M1083.0 112.8 V1312.8 M1143.0 112.8 V1312.8 M1203.0 112.8 V1312.8 M1263.0 112.8 V1312.8" stroke="#a0a5a3" stroke-width="2.28" fill="none"/><path d="M123.0 112.8 V1312.8 M423.0 112.8 V1312.8 M723.0 112.8 V1312.8 M1023.0 112.8 V1312.8 M1323.0 112.8 V1312.8" stroke="#a0a5a3" stroke-width="3.30" fill="none"/><path d="M123.0 172.8 H1323.0 M123.0 232.8 H1323.0 M123.0 292.8 H1323.0 M123.0 352.8 H1323.0 M123.0 472.8 H1323.0 M123.0 532.8 H1323.0 M123.0 592.8 H1323.0 M123.0 652.8 H1323.0 M123.0 772.8 H1323.0 M123.0 832.8 H1323.0 M123.0 892.8 H1323.0 M123.0 952.8 H1323.0 M123.0 1072.8 H1323.0 M123.0 1132.8 H1323.0 M123.0 1192.8 H1323.0 M123.0 1252.8 H1323.0" stroke="#a0a5a3" stroke-width="3.72" fill="none"/><path d="M123.0 112.8 H1323.0 M123.0 412.8 H1323.0 M123.0 712.8 H1323.0 M123.0 1012.8 H1323.0 M123.0 1312.8 H1323.0" stroke="#a0a5a3" stroke-width="5.40" fill="none"/><rect x="159.0" y="163.8" width="105.0" height="96.0" rx="18.0" fill="#2f3131"/><rect x="159.0" y="151.8" width="105.0" height="96.0" rx="18.0" fill="#424444"/><rect x="159.0" y="151.8" width="105.0" height="96.0" rx="18.0" fill="url(#dots)"/><rect x="1176.6" y="163.8" width="105.0" height="96.0" rx="18.0" fill="#2f3131"/><rect x="1176.6" y="151.8" width="105.0" height="96.0" rx="18.0" fill="#424444"/><rect x="1176.6" y="151.8" width="105.0" height="96.0" rx="18.0" fill="url(#dots)"/><rect x="159.0" y="1186.8" width="105.0" height="96.0" rx="18.0" fill="#2f3131"/><rect x="159.0" y="1174.8" width="105.0" height="96.0" rx="18.0" fill="#424444"/><rect x="159.0" y="1174.8" width="105.0" height="96.0" rx="18.0" fill="url(#dots)"/><rect x="1176.6" y="1186.8" width="105.0" height="96.0" rx="18.0" fill="#2f3131"/><rect x="1176.6" y="1174.8" width="105.0" height="96.0" rx="18.0" fill="#424444"/><rect x="1176.6" y="1174.8" width="105.0" height="96.0" rx="18.0" fill="url(#dots)"/><rect x="624.0" y="634.8" width="189.0" height="186.0" rx="21.0" fill="#2f3131"/><rect x="624.0" y="622.8" width="189.0" height="186.0" rx="21.0" fill="#424444"/><rect x="624.0" y="622.8" width="189.0" height="186.0" rx="21.0" fill="url(#dots)"/><rect x="412.8" y="54.0" width="40.2" height="45.6" rx="4.8" fill="#e4e4e4"/><path d="M420.0 91.8 L445.8 61.8" stroke="#9a9a9a" stroke-width="2.5"/><rect x="1347.0" y="136.8" width="87.0" height="81.0" rx="7.2" fill="#e8e8e8"/><rect x="1347.0" y="264.0" width="87.0" height="81.0" rx="7.2" fill="#e8e8e8"/><rect x="1347.0" y="388.8" width="87.0" height="81.0" rx="7.2" fill="#e8e8e8"/><rect x="1347.0" y="516.0" width="87.0" height="81.0" rx="7.2" fill="#e8e8e8"/><rect x="1347.0" y="642.0" width="87.0" height="81.0" rx="7.2" fill="#e8e8e8"/><rect x="1347.0" y="768.0" width="87.0" height="81.0" rx="7.2" fill="#e8e8e8"/><path d="M 1366.2 152.4 L 1414.8 202.8 M 1414.8 152.4 L 1366.2 202.8" fill="none" stroke="#8d8d8d" stroke-width="3.2" stroke-linejoin="round" stroke-linecap="round"/><path d="M 1395.0 276.0 L 1417.8 300.0 L 1395.0 324.0 L 1372.2 300.0 Z M 1356.0 337.2 L 1425.0 337.2 M 1368.6 318.0 L 1359.0 331.2 M 1356.6 321.6 L 1359.0 331.2 L 1371.0 330.0" fill="none" stroke="#8d8d8d" stroke-width="3.2" stroke-linejoin="round" stroke-linecap="round"/><path d="M 1386.6 310.8 L 1386.6 297.6 Q 1386.6 288.0 1395.0 288.0 Q 1403.4 288.0 1403.4 297.6 L 1403.4 310.8 M 1386.6 301.8 L 1403.4 301.8" fill="none" stroke="#8d8d8d" stroke-width="2.2"/><rect x="1359.0" y="400.8" width="39.0" height="15.6" rx="7.8" fill="none" stroke="#8d8d8d" stroke-width="3.2" stroke-linejoin="round" stroke-linecap="round"/><rect x="1404.0" y="400.8" width="21.0" height="36.0" rx="3.0" fill="none" stroke="#8d8d8d" stroke-width="3.2" stroke-linejoin="round" stroke-linecap="round"/><circle cx="1366.2" cy="426.6" r="6.6" fill="none" stroke="#8d8d8d" stroke-width="3.2" stroke-linejoin="round" stroke-linecap="round"/><circle cx="1386.6" cy="426.6" r="6.6" fill="none" stroke="#8d8d8d" stroke-width="3.2" stroke-linejoin="round" stroke-linecap="round"/><rect x="1359.0" y="442.8" width="66.0" height="18.0" rx="3.6" fill="none" stroke="#8d8d8d" stroke-width="3.2" stroke-linejoin="round" stroke-linecap="round"/><path d="M 1372.2 558.0 L 1372.2 543.6 Q 1372.2 528.0 1392.0 528.0 Q 1411.8 528.0 1411.8 543.6" fill="none" stroke="#8d8d8d" stroke-width="3.2" stroke-linejoin="round" stroke-linecap="round"/><rect x="1366.2" y="558.0" width="51.6" height="28.8" rx="6.0" fill="none" stroke="#8d8d8d" stroke-width="3.2" stroke-linejoin="round" stroke-linecap="round"/><path d="M 1357.8 666.0 L 1425.0 666.0 M 1357.8 702.0 L 1425.0 702.0" fill="none" stroke="#8d8d8d" stroke-width="3.2" stroke-linejoin="round" stroke-linecap="round"/><rect x="1368.6" y="655.2" width="14.4" height="21.6" rx="7.2" fill="#e8e8e8" stroke="#8d8d8d" stroke-width="3.2"/><rect x="1401.0" y="691.2" width="14.4" height="21.6" rx="7.2" fill="#e8e8e8" stroke="#8d8d8d" stroke-width="3.2"/><path d="M 1359.0 780.0 L 1425.0 780.0 M 1392.0 783.6 L 1392.0 840.0 M 1366.2 811.2 L 1392.0 783.6 L 1417.8 811.2" fill="none" stroke="#8d8d8d" stroke-width="3.2" stroke-linejoin="round" stroke-linecap="round"/></svg></div>
<svg class="a" style="left:0px;top:0px;pointer-events:none" width="1913" height="967" viewBox="0 0 1913 967"><text x="0" y="0" transform="matrix(0.321955,-0.018929,0.008819,0.159166,890.585,350.264)" font-family="Liberation Sans" font-weight="bold" font-size="100" fill="#f0724a">Untitled</text><text x="0" y="0" transform="matrix(0.385298,-0.027255,0.095837,0.274957,1607.607,671.363)" font-family="Liberation Sans" font-weight="bold" font-size="100" fill="#f0724a">01</text></svg>
<svg class="a" style="left:0px;top:0px;pointer-events:none" width="1913" height="967" viewBox="0 0 1913 967"><polygon points="1168.5,438.5 1174.8,474.7 1176,527.6 1169.5,491" fill="#13685f"/><polygon points="1168.2,438.8 1233.5,435.5 1240.6,470.4 1174.7,474.5" fill="#1b8075"/><polygon points="1174.7,474.5 1240.6,470.4 1240.9,523.5 1176,527.6" fill="#105d55"/><path d="M1191.5 445.5 L1215 443.5 L1196 466.5 L1220 464.8" fill="none" stroke="#125e57" stroke-width="2.2"/><path d="M1193.5 485.5 L1220 518" fill="none" stroke="#0c4f48" stroke-width="1.3"/><path d="M1221 483.5 L1193 518.5" fill="none" stroke="#1b8276" stroke-width="2"/><path d="M1168.8 449 V439 H1180 M1222.5 436 H1233.8 L1235.5 445 M1175 484 V475 H1187 M1229 471 H1240.8 V481 M1176.3 517.5 V527.3 M1240.9 513 V523.3 M1169.5 482 V492" stroke="#ffffff" stroke-width="2" fill="none"/></svg>
<svg class="a" style="left:0px;top:0px;pointer-events:none" width="1913" height="967" viewBox="0 0 1913 967"><path d="M897.9 730.5 L894.6 673" stroke="#00008e" stroke-width="3.2"/>
<polygon points="893.3,659.8 889.8,674.5 898.6,674" fill="#00008e"/>
<polygon points="893,685 895.5,679.5 898,685" fill="#0a6a0a"/>
<path d="M898 730.4 L971 723.6" stroke="#b40000" stroke-width="3.2"/>
<polygon points="986,723.6 970,720.5 970.6,728.3" fill="#b40000"/></svg>
<svg class="a" style="left:0px;top:0px;pointer-events:none" width="1913" height="967" viewBox="0 0 1913 967"><polygon points="542.3,838 542.3,842.1 621.9,836.9 631.3,882.2 631.3,945.2 551.7,953.9 542.3,900" fill="#c6c6c6"/>
<path d="M544 851.8 L625 848.5 M546 875.5 L629 871.5 M564 843 L569 878 M603 840 L609.5 875" stroke="#d6d6d6" stroke-width="1"/>
<text x="573" y="867" font-family="Liberation Sans" font-size="11" fill="#333" transform="rotate(-2 586 863)" textLength="27" lengthAdjust="spacingAndGlyphs">Top</text>
<text x="572.5" y="923.5" font-family="Liberation Sans" font-size="13.5" fill="#3a3a3a" transform="rotate(-2 590 918)" textLength="37" lengthAdjust="spacingAndGlyphs">Front</text>
<path d="M552 953 V891" stroke="#7b7bcd" stroke-width="2.6"/>
<polygon points="552,881.2 545.9,892.5 557.8,892.5" fill="#7b7bcd"/>
<path d="M552 953 L543.2 911" stroke="#79c279" stroke-width="2.6"/>
<polygon points="540.9,902.5 537.8,914.5 549.7,912" fill="#79c279"/>
<path d="M552 953.5 L626 947.8" stroke="#c97a7a" stroke-width="3"/>
<polygon points="637.5,947.3 625.6,942.4 625.6,954.2" fill="#c97a7a"/>
<text x="546.8" y="873" font-family="Liberation Sans" font-size="10.5" fill="#7b7bcd">z</text>
<text x="535.5" y="901" font-family="Liberation Sans" font-size="13" fill="#79c279">y</text>
<text x="650.8" y="952.3" font-family="Liberation Sans" font-size="11" fill="#c97a7a">x</text></svg>
<div class="a" style="left:1456px;top:811px;width:450px;height:54px;background:#fff;border:1px solid #f6ac75;border-radius:4px;box-sizing:border-box"></div>
<div class="a" style="left:1456px;top:811px;width:9px;height:54px;background:#f9ad6f;border-radius:4px 0 0 4px"></div>
<div id="t_warn" class="t" style="left:1473.78px;top:822.65px;font-size:15px;line-height:15px;color:#323232;font-weight:400;transform:scaleX(1.0133);transform-origin:0 0;">WARNING:</div>
<div id="t_accel" class="t" style="left:1473.78px;top:840.65px;font-size:15px;line-height:15px;color:#323232;font-weight:400;transform:scaleX(1.0502);transform-origin:0 0;">The acceleration setting exceeds the printer's..</div>
<div id="t_more" class="t" style="left:1804.48px;top:840.65px;font-size:15px;line-height:15px;color:#009688;font-weight:400;transform:scaleX(1.0909);transform-origin:0 0;text-decoration:underline;">More</div>
<div class="a" style="left:1873px;top:824px;width:23px;height:22px;background:#ececec;border-radius:2px"></div>
<svg class="a" style="left:1877px;top:828px;" width="15" height="15" viewBox="0 0 15 15"><path d="M2 2 L13 13 M13 2 L2 13" stroke="#4a4a4a" stroke-width="1.3"/></svg>
<div class="a" style="left:1456px;top:875px;width:450px;height:90px;background:#fff;border:1px solid #009688;border-radius:4px;box-sizing:border-box"></div>
<div class="a" style="left:1456px;top:875px;width:9px;height:90px;background:#009688;border-radius:4px 0 0 4px"></div>
<div id="t_obj" class="t" style="left:1473.78px;top:886.65px;font-size:15px;line-height:15px;color:#323232;font-weight:400;transform:scaleX(1.0407);transform-origin:0 0;">Object name: xyzCalibration_cube.stl</div>
<div id="t_size" class="t" style="left:1473.78px;top:904.35px;font-size:15px;line-height:15px;color:#323232;font-weight:400;transform:scaleX(1.0238);transform-origin:0 0;">Size: 20 x 20 x 20 mm</div>
<div id="t_vol" class="t" style="left:1473.78px;top:922.25px;font-size:15px;line-height:15px;color:#323232;font-weight:400;transform:scaleX(1.0445);transform-origin:0 0;">Volume: 7788.19 mm<sup style="font-size:8px;vertical-align:6px;line-height:0">3</sup></div>
<div id="t_tri" class="t" style="left:1473.78px;top:940.25px;font-size:15px;line-height:15px;color:#323232;font-weight:400;transform:scaleX(1.0319);transform-origin:0 0;">Triangles: 136</div>
<div class="a" style="left:1873px;top:884px;width:23px;height:22px;background:#ececec;border-radius:2px"></div>
<svg class="a" style="left:1877px;top:888px;" width="15" height="15" viewBox="0 0 15 15"><path d="M2 2 L13 13 M13 2 L2 13" stroke="#4a4a4a" stroke-width="1.3"/></svg>
<div class="a" style="left:1880px;top:940px;width:15px;height:15px;background:#ececec;border-radius:2px"></div>
<div class="a" style="left:1883px;top:947px;width:9px;height:1px;background:#555"></div>
<svg class="a" style="left:0px;top:0px;pointer-events:none" width="1913" height="967" viewBox="0 0 1913 967"><polygon points="430.4,478.4 514.3,439.4 514.3,458.3 598.3,458.3 598.3,497.5 514.3,497.5 514.3,516.4" fill="none" stroke="#ec1c24" stroke-width="4.5" stroke-linejoin="round"/></svg></body></html>
